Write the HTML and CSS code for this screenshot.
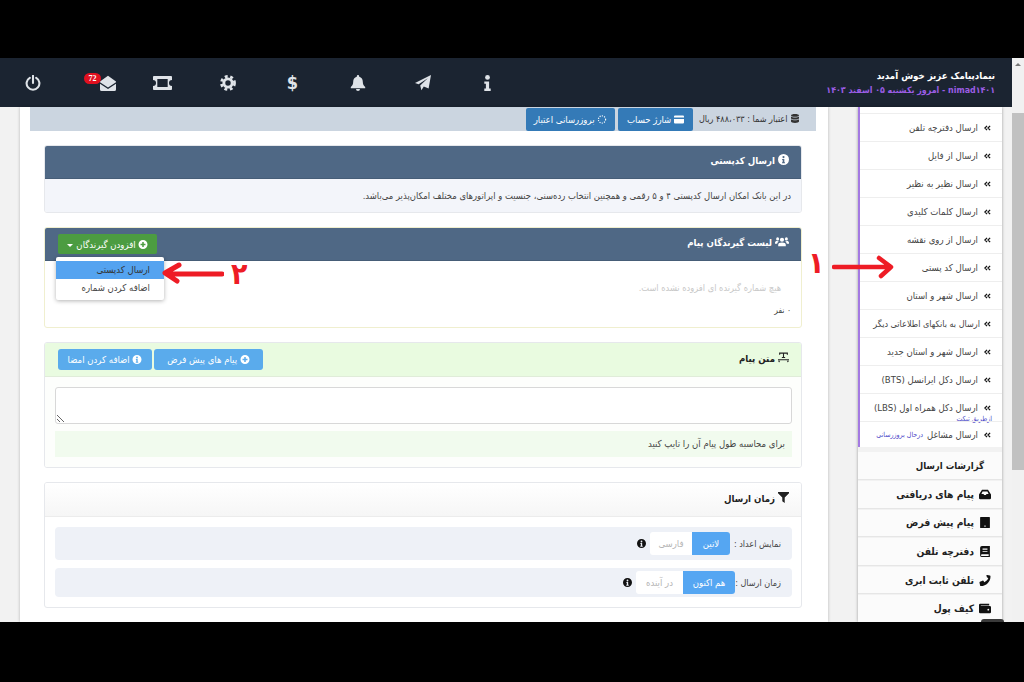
FILE: index.html
```html
<!DOCTYPE html>
<html lang="fa" dir="rtl">
<head>
    <meta charset="UTF-8">
    <title>ارسال کدپستی</title>
    <link rel="stylesheet" href="styles.css">
</head>
<body>
    <!-- Icons -->
    <svg class="icon-defs" aria-hidden="true">
        <symbol id="i-info-circle" viewBox="0 0 20 20"><path fill-rule="evenodd" d="M10 0a10 10 0 1 0 0 20 10 10 0 0 0 0-20zM10 3.500a2 2 0 1 1 0 4 2 2 0 0 1 0-4zM7.500 9h4v6h1.200v2H7.300v-2h1.200v-4h-1z"/></symbol>
        <symbol id="i-plus-circle" viewBox="0 0 20 20"><path fill-rule="evenodd" d="M10 0a10 10 0 1 0 0 20 10 10 0 0 0 0-20zM8.300 4.500h3.400v3.800h3.800v3.400h-3.800v3.800H8.300v-3.800H4.500V8.300h3.800z"/></symbol>
        <symbol id="i-users" viewBox="0 0 24 18"><circle cx="12" cy="6" r="3.600"/><circle cx="4.500" cy="4.500" r="2.600"/><circle cx="19.500" cy="4.500" r="2.600"/><path d="M5.500 17v-2.500C5.500 12 8 10.500 12 10.500s6.500 1.500 6.500 4V17zM0 13v-2c0-2 1.500-3 3.500-3 1.200 0 2.200.3 3 1-1.500 1-2.600 2.300-2.800 4zM24 13v-2c0-2-1.500-3-3.500-3-1.200 0-2.200.3-3 1 1.500 1 2.600 2.300 2.800 4z"/></symbol>
        <symbol id="i-chevrons" viewBox="0 0 16 12"><path d="M7 1 2 6l5 5M14 1 9 6l5 5" fill="none" stroke="currentColor" stroke-width="2.800"/></symbol>
        <symbol id="i-db" viewBox="0 0 16 18"><path d="M8 0c4.400 0 8 1.200 8 2.800S12.400 5.600 8 5.600 0 4.400 0 2.800 3.600 0 8 0zM0 5c1.500 1.300 4.500 2 8 2s6.500-.7 8-2v3.500c0 1.500-3.600 2.700-8 2.700S0 10 0 8.500zM0 10.700c1.500 1.300 4.500 2 8 2s6.500-.7 8-2v4.500C16 16.800 12.400 18 8 18s-8-1.200-8-2.800z"/></symbol>
        <symbol id="i-card" viewBox="0 0 20 16"><path d="M2 0h16a2 2 0 0 1 2 2v2H0V2a2 2 0 0 1 2-2zM0 7h20v7a2 2 0 0 1-2 2H2a2 2 0 0 1-2-2z"/></symbol>
        <symbol id="i-spinner" viewBox="0 0 20 20"><g fill="none" stroke="currentColor" stroke-width="2.600" stroke-dasharray="2.400 2.800"><circle cx="10" cy="10" r="8"/></g></symbol>
        <symbol id="i-text-size" viewBox="0 0 20 18"><path d="M2 0h16v4h-2V2h-5v6h2v2H7V8h2V2H4v2H2zM0 12h20v2H0zM2 18l-2-3h4zM18 18l-2-3h4z"/></symbol>
        <symbol id="i-filter" viewBox="0 0 18 18"><path d="M0 0h18v2l-7 7v9l-4-3V9L0 2z"/></symbol>
        <symbol id="i-inbox" viewBox="0 0 20 16"><path fill-rule="evenodd" d="M5 0h10l5 8v6a2 2 0 0 1-2 2H2a2 2 0 0 1-2-2V8zM6 3 4 7h3.500l1 2h3l1-2H16l-2-4z"/></symbol>
        <symbol id="i-tablet" viewBox="0 0 16 18"><path fill-rule="evenodd" d="M1 0h14a1 1 0 0 1 1 1v16a1 1 0 0 1-1 1H1a1 1 0 0 1-1-1V1a1 1 0 0 1 1-1zM7 14v2h2v-2z"/></symbol>
        <symbol id="i-book" viewBox="0 0 16 18"><path fill-rule="evenodd" d="M3 0h13v18H3a3 3 0 0 1-3-3V3a3 3 0 0 1 3-3zM4 4v2h8V4zM4 8v1.500h8V8zM3 13.500a1.500 1.500 0 0 0 0 3h11v-3z"/></symbol>
        <symbol id="i-phone" viewBox="0 0 18 18"><path d="M12.500 0 17 1c.6.2 1 .7 1 1.300C18 11 11 18 2.300 18c-.6 0-1.100-.4-1.300-1L0 12.500c-.1-.6.2-1.100.7-1.400l4.200-1.800c.5-.2 1-.1 1.400.3l1.800 2.200c2.800-1.400 5-3.700 6.300-6.300l-2.200-1.800c-.4-.3-.5-.9-.3-1.400L11.100.7c.3-.5.8-.8 1.400-.7z"/></symbol>
        <symbol id="i-wallet" viewBox="0 0 20 16"><path fill-rule="evenodd" d="M2 0h15v3H3v1h15a2 2 0 0 1 2 2v8a2 2 0 0 1-2 2H2a2 2 0 0 1-2-2V2a2 2 0 0 1 2-2zM15.500 8.500a1.500 1.500 0 1 0 0 3 1.500 1.500 0 0 0 0-3z"/></symbol>
        <symbol id="i-power" viewBox="0 0 20 20"><path d="M6 3.500a8 8 0 1 0 8 0M10 1v9" fill="none" stroke="currentColor" stroke-width="2.600" stroke-linecap="round"/></symbol>
        <symbol id="i-envelope" viewBox="0 0 20 20"><path d="M10 1 20 8v1l-10 6.500L0 9V8zM0 11l10 6.500L20 11v7a2 2 0 0 1-2 2H2a2 2 0 0 1-2-2z"/></symbol>
        <symbol id="i-ticket" viewBox="0 0 22 16"><path fill-rule="evenodd" d="M1 0h20a1 1 0 0 1 1 1v3.500a3.500 3.500 0 0 0 0 7V15a1 1 0 0 1-1 1H1a1 1 0 0 1-1-1v-3.500a3.500 3.500 0 0 0 0-7V1a1 1 0 0 1 1-1zM5 3.500v9h12v-9z"/></symbol>
        <symbol id="i-cog" viewBox="0 0 20 20"><circle cx="10" cy="10" r="5.200" fill="none" stroke="currentColor" stroke-width="3.600"/><circle cx="10" cy="10" r="8.200" fill="none" stroke="currentColor" stroke-width="3.400" stroke-dasharray="3.600 3.270"/></symbol>
        <symbol id="i-bell" viewBox="0 0 18 20"><path d="M9 0a1.500 1.500 0 0 1 1.500 1.500v.7C13.500 3 15 5.500 15 8.500c0 3.500 1.200 5 3 6.500v1.500H0V15c1.800-1.500 3-3 3-6.500 0-3 1.500-5.500 4.500-6.300v-.7A1.500 1.500 0 0 1 9 0zM6.500 17.500h5a2.500 2.500 0 0 1-5 0z"/></symbol>
        <symbol id="i-plane" viewBox="0 0 20 20"><path d="M20 0 17 17l-6-2.500L8 19l-1.500-6L16 4 4.500 11.500 0 10z"/></symbol>
        <symbol id="i-info" viewBox="0 0 8 20"><circle cx="4" cy="3" r="3"/><path d="M0 8h6v9h2v3H0v-3h2v-6H0z"/></symbol>
    </svg>

    <div class="black-bar bar-top"></div>

    <div class="app">
        <!-- Scrollbar -->
        <div class="scrollbar">
            <span class="scroll-arrow"></span>
            <div class="scroll-thumb"></div>
        </div>

        <div class="page">
            <!-- Header -->
            <header class="topbar">
                <div class="welcome">
                    <div class="welcome-title">نیمادپیامک عزیز خوش آمدید</div>
                    <div class="welcome-sub">nimad۱۴۰۱ - امروز یکشنبه ۰۵ اسفند ۱۴۰۳</div>
                </div>
                <nav class="top-nav">
                    <a class="nav-item"><svg class="nav-i-info"><use href="#i-info"/></svg></a>
                    <a class="nav-item"><svg class="nav-icon"><use href="#i-plane"/></svg></a>
                    <a class="nav-item"><svg class="nav-icon"><use href="#i-bell"/></svg></a>
                    <a class="nav-item nav-dollar">$</a>
                    <a class="nav-item"><svg class="nav-icon"><use href="#i-cog"/></svg></a>
                    <a class="nav-item"><svg class="nav-ticket"><use href="#i-ticket"/></svg></a>
                    <a class="nav-item nav-mail"><svg class="nav-icon"><use href="#i-envelope"/></svg><span class="badge">72</span></a>
                    <a class="nav-item"><svg class="nav-icon"><use href="#i-power"/></svg></a>
                </nav>
            </header>

            <div class="content">
                <!-- Sidebar -->
                <aside class="sidebar">
                    <ul class="submenu">
                        <li><svg class="chev"><use href="#i-chevrons"/></svg>ارسال دفترچه تلفن</li>
                        <li><svg class="chev"><use href="#i-chevrons"/></svg>ارسال از فایل</li>
                        <li><svg class="chev"><use href="#i-chevrons"/></svg>ارسال نظیر به نظیر</li>
                        <li><svg class="chev"><use href="#i-chevrons"/></svg>ارسال کلمات کلیدی</li>
                        <li><svg class="chev"><use href="#i-chevrons"/></svg>ارسال از روی نقشه</li>
                        <li><svg class="chev"><use href="#i-chevrons"/></svg>ارسال کد پستی</li>
                        <li><svg class="chev"><use href="#i-chevrons"/></svg>ارسال شهر و استان</li>
                        <li class="tight"><svg class="chev"><use href="#i-chevrons"/></svg>ارسال به بانکهای اطلاعاتی دیگر</li>
                        <li><svg class="chev"><use href="#i-chevrons"/></svg>ارسال شهر و استان جدید</li>
                        <li><svg class="chev"><use href="#i-chevrons"/></svg>ارسال دکل ایرانسل (BTS)</li>
                        <li class="has-note"><svg class="chev"><use href="#i-chevrons"/></svg>ارسال دکل همراه اول (LBS)<span class="note">ازطریق تیکت</span></li>
                        <li><svg class="chev"><use href="#i-chevrons"/></svg>ارسال مشاغل <span class="note-inline">درحال بروزرسانی</span></li>
                    </ul>
                    <div class="side-link side-plain">گزارشات ارسال</div>
                    <div class="side-link"><svg class="side-icon"><use href="#i-inbox"/></svg>پیام های دریافتی</div>
                    <div class="side-link"><svg class="side-icon"><use href="#i-tablet"/></svg>پیام پیش فرض</div>
                    <div class="side-link"><svg class="side-icon"><use href="#i-book"/></svg>دفترچه تلفن</div>
                    <div class="side-link"><svg class="side-icon"><use href="#i-phone"/></svg>تلفن ثابت ابری</div>
                    <div class="side-link"><svg class="side-icon"><use href="#i-wallet"/></svg>کیف پول</div>
                </aside>

                <!-- Main Content -->
                <main class="main">
                    <div class="credit-bar">
                        <span class="credit-text"><svg class="ic"><use href="#i-db"/></svg> اعتبار شما : ۴۸۸،۰۳۳ ریال</span>
                        <button class="btn-blue"><svg class="ic"><use href="#i-card"/></svg> شارژ حساب</button>
                        <button class="btn-blue"><svg class="ic"><use href="#i-spinner"/></svg> بروزرسانی اعتبار</button>
                    </div>

                    <section class="card">
                        <div class="card-head head-dark">
                            <h2><svg class="ic-h"><use href="#i-info-circle"/></svg> ارسال کدپستی</h2>
                        </div>
                        <div class="card-body body-info">
                            در این بانک امکان ارسال کدپستی ۴ و ۵ رقمی و همچنین انتخاب رده‌سنی، جنسیت و اپراتورهای مختلف امکان‌پذیر می‌باشد.
                        </div>
                    </section>

                    <section class="card card-yellow">
                        <div class="card-head head-dark">
                            <h2><svg class="ic-users"><use href="#i-users"/></svg> لیست گیرندگان پیام</h2>
                            <button class="btn-green"><svg class="ic"><use href="#i-plus-circle"/></svg> افزودن گیرندگان <span class="caret"></span></button>
                        </div>
                        <div class="card-body body-list">
                            <p class="empty-text">هیچ شماره گیرنده ای افزوده نشده است.</p>
                            <p class="count-text">۰ نفر</p>
                        </div>
                    </section>

                    <section class="card">
                        <div class="card-head head-green">
                            <h2><svg class="ic-h"><use href="#i-text-size"/></svg> متن پیام</h2>
                            <div class="head-buttons">
                                <button class="btn-sky"><svg class="ic"><use href="#i-plus-circle"/></svg> پیام های پیش فرض</button>
                                <button class="btn-sky"><svg class="ic"><use href="#i-info-circle"/></svg> اضافه کردن امضا</button>
                            </div>
                        </div>
                        <div class="card-body body-message">
                            <textarea class="message-box"></textarea>
                            <div class="hint">برای محاسبه طول پیام آن را تایپ کنید</div>
                        </div>
                    </section>

                    <section class="card">
                        <div class="card-head head-light">
                            <h2><svg class="ic-h"><use href="#i-filter"/></svg> زمان ارسال</h2>
                        </div>
                        <div class="card-body body-time">
                            <div class="option-row row-digits">
                                <span class="option-label">نمایش اعداد :</span>
                                <div class="toggle toggle-digits"><span class="toggle-on">لاتین</span><span class="toggle-off">فارسی</span></div>
                                <svg class="ic-dark"><use href="#i-info-circle"/></svg>
                            </div>
                            <div class="option-row row-when">
                                <span class="option-label">زمان ارسال :</span>
                                <div class="toggle toggle-when"><span class="toggle-on">هم اکنون</span><span class="toggle-off">در آینده</span></div>
                                <svg class="ic-dark"><use href="#i-info-circle"/></svg>
                            </div>
                        </div>
                    </section>
                </main>
            </div>
        </div>
    </div>

    <div class="black-bar bar-bottom"></div>

    <!-- Dropdown and annotations, over the page -->
    <div class="dropdown">
        <div class="dropdown-item active">ارسال کدپستی</div>
        <div class="dropdown-item">اضافه کردن شماره</div>
    </div>
    <div class="side-tab"></div>
    <svg class="arrow arrow-one" viewBox="0 0 62 24"><path d="M2 12h56M47 3l12 9-10 9" fill="none" stroke="#ee1c25" stroke-width="4.500" stroke-linecap="round" stroke-linejoin="round"/></svg>
    <svg class="arrow arrow-two" viewBox="0 0 62 24"><path d="M60 13H6M17 4 3 12l12 8" fill="none" stroke="#ee1c25" stroke-width="5" stroke-linecap="round" stroke-linejoin="round"/></svg>
    <span class="mark mark-one">۱</span>
    <span class="mark mark-two">۲</span>
</body>
</html>
```

FILE: styles.css
```css
/* General Styles */
html, body {
    margin: 0;
    padding: 0;
    height: 682px;
    overflow: hidden;
}
body {
    position: relative;
    font-family: 'DejaVu Sans Condensed', 'DejaVu Sans', sans-serif;
    font-stretch: condensed;
    font-size: 9px;
    color: #333333;
    background-color: #000000;
}
.icon-defs {
    display: none;
}
.black-bar {
    background-color: #000000;
}
.bar-top {
    height: 58px;
}
.bar-bottom {
    height: 60px;
}
.app {
    display: flex;
    height: 564px;
    overflow: hidden;
}
.page {
    flex: 1;
    min-width: 0;
    display: flex;
    flex-direction: column;
}

/* Scrollbar */
.scrollbar {
    width: 12px;
    background-color: #f1f1f1;
    display: flex;
    flex-direction: column;
    align-items: center;
}
.scroll-arrow {
    margin-top: 5px;
    border-left: 3px solid transparent;
    border-right: 3px solid transparent;
    border-bottom: 3px solid #777777;
}
.scroll-thumb {
    width: 100%;
    height: 357px;
    margin-top: 47px;
    background-color: #c1c1c1;
}

/* Header */
.topbar {
    height: 49px;
    flex: none;
    display: flex;
    justify-content: space-between;
    align-items: center;
    background-color: #1b2431;
}
.welcome {
    padding-right: 17px;
    padding-top: 1px;
}
.welcome-title {
    color: #ffffff;
    font-size: 9.600px;
    font-weight: bold;
    line-height: 15px;
}
.welcome-sub {
    color: #9b5de5;
    font-size: 8.800px;
    font-weight: bold;
    line-height: 15px;
}
.top-nav {
    display: flex;
}
.nav-item {
    position: relative;
    width: 65px;
    display: flex;
    justify-content: center;
    align-items: center;
    color: #dfe3e8;
    fill: #dfe3e8;
}
.nav-icon {
    width: 16px;
    height: 16px;
}
.nav-i-info {
    width: 7px;
    height: 16px;
}
.nav-ticket {
    width: 19px;
    height: 14px;
}
.nav-dollar {
    font-size: 18px;
    font-weight: bold;
}
.nav-mail .nav-icon {
    margin-left: 21px;
}
.badge {
    position: absolute;
    left: 19px;
    top: 1px;
    width: 17px;
    height: 11px;
    border-radius: 6px;
    background-color: #e0101f;
    color: #ffffff;
    font-family: 'Liberation Serif', serif;
    font-size: 8px;
    font-weight: bold;
    line-height: 11px;
    text-align: center;
}

/* Layout below the header */
.content {
    flex: 1;
    min-height: 0;
    display: flex;
    padding-right: 10px;
    background-color: #f2f2f2;
}

/* Sidebar */
.sidebar {
    width: 144px;
    flex: none;
    box-shadow: 0 0 3px rgba(0, 0, 0, 0.35);
}
.submenu {
    list-style: none;
    margin: 0;
    padding: 6px 0 0 0;
    border-left: 2px solid #a47ae2;
    background-color: #ffffff;
}
.submenu li {
    position: relative;
    height: 27px;
    display: flex;
    align-items: center;
    gap: 6px;
    padding-right: 11px;
    border-top: 1px solid #eeeeee;
    color: #444444;
    font-size: 9.500px;
    white-space: nowrap;
}
.submenu li:last-child {
    height: 25px;
}
.submenu li.tight {
    gap: 4px;
    font-size: 9px;
}
.chev {
    width: 7px;
    height: 6px;
    flex: none;
    color: #111111;
}
.note {
    position: absolute;
    right: 10px;
    bottom: -2px;
    color: #4a48c8;
    font-size: 7px;
}
.note-inline {
    color: #4a48c8;
    font-size: 7px;
    margin-right: -2px;
}
.side-link {
    height: 26.600px;
    margin-top: 1px;
    display: flex;
    align-items: center;
    gap: 5px;
    padding-right: 11px;
    background-color: #fbfbfb;
    border-bottom: 1px solid #e6e6e6;
    color: #222222;
    font-size: 10.200px;
    font-weight: bold;
}
.side-plain {
    height: 27px;
    margin-top: 5px;
    padding-right: 18px;
    font-size: 9.500px;
}
.side-icon {
    width: 12px;
    height: 11px;
    flex: none;
    fill: #111111;
}

/* Main Content */
.main {
    flex: 1;
    min-width: 0;
    margin: 0 30px 0 20px;
    padding: 0 12px 0 10px;
    background-color: #ffffff;
    box-shadow: 0 0 3px rgba(0, 0, 0, 0.25);
}
.credit-bar {
    height: 24px;
    margin-bottom: 14px;
    display: flex;
    align-items: center;
    gap: 3px;
    padding-right: 16px;
    background-color: #cbd5e0;
}
.credit-text {
    width: 103px;
    margin-left: 1px;
    color: #333333;
    font-size: 9px;
    white-space: nowrap;
}
.ic {
    width: 10px;
    height: 9px;
    vertical-align: -1px;
    fill: currentColor;
}
.btn-blue, .btn-green, .btn-sky {
    border: none;
    border-radius: 2px;
    color: #ffffff;
    font-family: inherit;
    font-stretch: inherit;
    font-size: 9.500px;
    padding: 0;
    white-space: nowrap;
}
.btn-blue {
    height: 23px;
    background-color: #347ab7;
}
.btn-blue:nth-of-type(1) {
    width: 75px;
}
.btn-blue:nth-of-type(2) {
    width: 89px;
}

/* Cards */
.card {
    margin: 0 14px 14px 14px;
    border: 1px solid #e6e8ec;
    border-radius: 3px;
    overflow: hidden;
}
.card-head {
    height: 33px;
    display: flex;
    justify-content: space-between;
    align-items: center;
    padding: 0 12px 0 13px;
    box-sizing: border-box;
}
.card-head h2 {
    margin: 0 0 4px 0;
    font-size: 9.600px;
    font-weight: bold;
}
.head-dark {
    background-color: #4f6885;
    border-bottom: 1px solid #465d77;
}
.head-dark h2 {
    color: #ffffff;
}
.head-green {
    height: 34px;
    background-color: #e9fbe0;
    border-bottom: 1px solid #e0ecd9;
}
.head-green h2, .head-light h2 {
    color: #222222;
}
.head-light {
    height: 34px;
    background-image: linear-gradient(#ffffff, #f6f6f6);
    border-bottom: 1px solid #ececec;
}
.ic-h {
    width: 11px;
    height: 11px;
    vertical-align: -1px;
    fill: currentColor;
}
.ic-users {
    width: 14px;
    height: 11px;
    vertical-align: -1px;
    fill: currentColor;
}
.card-body {
    font-size: 9.500px;
}
.body-info {
    height: 33px;
    line-height: 33px;
    padding-right: 10px;
    background-color: #f3f5fa;
    color: #444444;
    white-space: nowrap;
    font-size: 9.400px;
}
.card-yellow {
    border-color: #f0efcf;
}
.body-list {
    height: 66px;
    padding: 0 10px;
    box-sizing: border-box;
}
.empty-text {
    margin: 0;
    padding: 21px 10px 0 0;
    color: #c8c8c8;
    font-size: 9.200px;
}
.count-text {
    margin: 12px 0 0 0;
    color: #444444;
    font-size: 8.500px;
}
.btn-green {
    width: 99px;
    height: 20px;
    background-color: #4c9c41;
}
.caret {
    display: inline-block;
    margin-right: 1px;
    vertical-align: 1px;
    border-left: 3px solid transparent;
    border-right: 3px solid transparent;
    border-top: 3px solid #ffffff;
}
.head-buttons {
    display: flex;
    gap: 2px;
}
.btn-sky {
    height: 21px;
    background-color: #5aabec;
    border-radius: 3px;
}
.btn-sky:nth-child(1) {
    width: 109px;
}
.btn-sky:nth-child(2) {
    width: 94px;
}
.body-message {
    height: 90px;
    padding: 10px 9px 0 10px;
    box-sizing: border-box;
    background-color: #fdfefc;
}
.message-box {
    display: block;
    width: 100%;
    height: 37px;
    box-sizing: border-box;
    border: 1px solid #d8d8d8;
    border-radius: 3px;
    background-color: #ffffff;
    margin: 0;
}
.hint {
    height: 26px;
    line-height: 26px;
    margin-top: 7px;
    padding-right: 7px;
    background-color: #f1fbee;
    color: #444444;
}
.body-time {
    height: 90px;
    padding: 10px 9px 0 10px;
    box-sizing: border-box;
}
.option-row {
    display: flex;
    align-items: center;
    padding-right: 11px;
    border-radius: 4px;
    background-color: #eef1f7;
    color: #444444;
}
.row-digits {
    height: 33px;
    margin-bottom: 8px;
}
.row-when {
    height: 29px;
}
.option-label {
    font-size: 9px;
    white-space: nowrap;
}
.row-digits .option-label {
    width: 51px;
}
.row-when .option-label {
    width: 46px;
}
.toggle {
    display: flex;
    margin-left: 4px;
    height: 23px;
    line-height: 23px;
    text-align: center;
    background-color: #ffffff;
    border-radius: 3px;
    overflow: hidden;
    font-size: 9.500px;
}
.toggle-on {
    background-color: #55a6f2;
    color: #ffffff;
}
.toggle-off {
    color: #b5b5b5;
}
.toggle-digits .toggle-on {
    width: 38px;
}
.toggle-digits .toggle-off {
    width: 42px;
}
.toggle-when .toggle-on {
    width: 52px;
}
.toggle-when .toggle-off {
    width: 47px;
}
.ic-dark {
    width: 9px;
    height: 9px;
    fill: #111111;
}

/* Dropdown */
.dropdown {
    position: absolute;
    left: 56px;
    top: 257px;
    width: 108px;
    height: 43px;
    padding-top: 4px;
    box-sizing: border-box;
    background-color: #ffffff;
    border-radius: 2px;
    box-shadow: 0 1px 4px rgba(0, 0, 0, 0.3);
}
.dropdown-item {
    height: 18px;
    line-height: 18px;
    padding-right: 14px;
    color: #444444;
    font-size: 9.500px;
}
.dropdown-item.active {
    background-color: #54a3f0;
    color: #333333;
}
.side-tab {
    position: absolute;
    left: 981px;
    top: 619px;
    width: 23px;
    height: 3px;
    border-radius: 3px 3px 0 0;
    background-color: #3a3a3a;
}

/* Annotations */
.arrow {
    position: absolute;
    width: 62px;
    height: 24px;
}
.arrow-one {
    left: 832px;
    top: 255px;
}
.arrow-two {
    left: 162px;
    top: 261px;
}
.mark {
    position: absolute;
    color: #ee1c25;
    font-family: 'DejaVu Sans', sans-serif;
    font-size: 30px;
    font-weight: bold;
    line-height: 30px;
}
.mark-one {
    left: 808px;
    top: 248px;
}
.mark-two {
    left: 231px;
    top: 259px;
}
```
